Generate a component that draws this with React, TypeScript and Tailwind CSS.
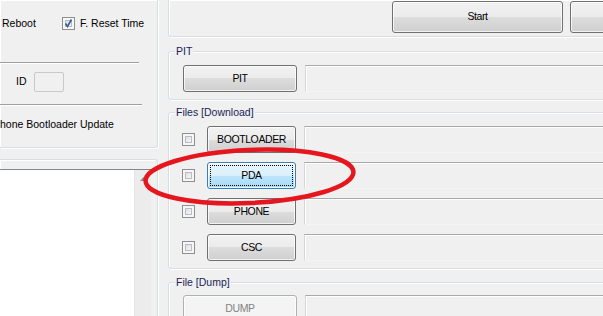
import type { ReactNode } from "react";

function GroupBox({ label, className = "", children }: { label?: string; className?: string; children?: ReactNode }) {
  return (
    <div className={`relative shrink-0 border border-[#d5dfe5] shadow-[inset_1px_1px_0_#fff,1px_1px_0_#fff] ${className}`}>
      {label ? (
        <span className="absolute -top-[7px] left-[6px] bg-[#f0f0f0] px-[1px] leading-[13px] text-[#1a2458]">{label}</span>
      ) : null}
      {children}
    </div>
  );
}

function WinButton({ children, className = "", state = "normal" }: { children?: ReactNode; className?: string; state?: "normal" | "hot" | "disabled" }) {
  const look =
    state === "hot"
      ? "border-[#3c7fb1] bg-[linear-gradient(#eaf6fd_0%,#d9f0fc_50%,#bee6fd_50%,#a7d9f5_100%)] text-black"
      : state === "disabled"
        ? "border-[#adb2b5] bg-[#f4f4f4] text-[#838383]"
        : "border-[#707070] bg-[linear-gradient(#f2f2f2_0%,#ebebeb_50%,#dddddd_50%,#cfcfcf_100%)] text-black";
  return (
    <div className={`relative shrink-0 flex items-center justify-center rounded-[3px] border shadow-[inset_0_0_0_1px_rgba(255,255,255,0.75)] ${look} ${className}`}>
      {state === "hot" ? <span className="absolute inset-[2px] border border-dotted border-black" /> : null}
      {children ? <span className="relative tracking-[-0.4px]">{children}</span> : null}
    </div>
  );
}

function CheckBox({ checked = false }: { checked?: boolean }) {
  return (
    <div className="relative w-[13px] h-[13px] shrink-0 border border-[#8f8f8f] bg-[#f6f6f6] p-[2px]">
      <div className="w-full h-full border border-[#b9bcc0] bg-[linear-gradient(135deg,#dcdee1,#f8f8f8)]" />
      {checked ? (
        <svg viewBox="0 0 11 11" className="absolute left-0 top-0 w-[11px] h-[11px]">
          <path d="M2.5 5.5 L4.5 8.5 L8.5 1.5" fill="none" stroke="#3a5a9a" strokeWidth="1.6" />
        </svg>
      ) : null}
    </div>
  );
}

function Field({ className = "" }: { className?: string }) {
  return (
    <div className={`h-[27px] flex-1 border border-t-[#a9a9a9] border-l-[#d6d6d6] border-r-[#d6d6d6] border-b-[#f4f4f4] bg-[#f0f0f0] shadow-[inset_1px_1px_0_#fff] ${className}`} />
  );
}

function Separator({ className = "" }: { className?: string }) {
  return <div className={`h-[2px] border-t border-[#a0a0a0] border-b border-b-white ${className}`} />;
}

const rows = ["BOOTLOADER", "PDA", "PHONE", "CSC"];

export default function App() {
  return (
    <div className="relative w-[603px] h-[316px] overflow-hidden bg-[#f0f0f0] flex font-['Liberation_Sans',Arial,sans-serif] text-[10.5px] text-black">
      {/* left column: options and message */}
      <div className="w-[160px] shrink-0 flex flex-col">
        <GroupBox className="w-[158px] h-[148px] border-t-0 border-l-0 rounded-br-[3px]">
          <div className="h-[62px] pt-[17px]">
            <div className="flex items-center h-[13px]">
              <span className="w-[62px] pl-[2px]">Reboot</span>
              <CheckBox checked />
              <span className="ml-[5px]">F. Reset Time</span>
            </div>
          </div>
          <Separator className="w-[139px]" />
          <div className="h-[40px] pt-[8px] flex items-start">
            <div className="flex items-center h-[20px]">
              <span className="ml-[16px]">ID</span>
              <div className="ml-[7px] w-[30px] h-[20px] rounded-[2px] border border-[#c8c8c8] bg-[#f0f0f0]" />
            </div>
          </div>
          <Separator className="w-[142px]" />
          <div className="pt-[12px] leading-[13px]">hone Bootloader Update</div>
        </GroupBox>
        <GroupBox className="mt-[11px] w-[158px] flex-1 border-l-0 border-b-0 rounded-tr-[3px] pt-[9px]">
          <div className="w-[151px] h-full flex border-t border-[#828790] bg-white">
            <div className="flex-1" />
            <div className="w-[17px] h-full bg-[#ececec] border-l border-[#e4e4e4] flex justify-center pt-[7px]">
              <svg viewBox="0 0 7 4" className="w-[7px] h-[4px]">
                <path d="M0 4 L3.5 0 L7 4 Z" fill="#8a8a8a" />
              </svg>
            </div>
          </div>
        </GroupBox>
      </div>

      {/* right column: start, pit, files, dump */}
      <div className="flex-1 pl-[8px] flex flex-col">
        <GroupBox className="w-[470px] h-[37px] border-t-0 rounded-bl-[3px]">
          <div className="flex pl-[223px] pt-[1px]">
            <WinButton className="w-[171px] h-[32px]">Start</WinButton>
            <WinButton className="ml-[7px] w-[171px] h-[32px]" />
          </div>
        </GroupBox>

        <GroupBox label="PIT" className="mt-[14px] w-[470px] h-[49px] rounded-[3px]">
          <div className="flex pl-[14px] pt-[13px]">
            <WinButton className="w-[114px] h-[27px]">PIT</WinButton>
            <Field className="ml-[8px]" />
          </div>
        </GroupBox>

        <GroupBox label="Files [Download]" className="mt-[12px] w-[470px] h-[157px] rounded-[3px]">
          <div className="flex flex-col gap-[9px] pl-[13px] pt-[13px]">
            {rows.map((r) => (
              <div key={r} className="flex items-center h-[27px]">
                <CheckBox />
                <WinButton state={r === "PDA" ? "hot" : "normal"} className="ml-[12px] w-[89px] h-[27px]">
                  {r}
                </WinButton>
                <Field className="ml-[8px]" />
              </div>
            ))}
          </div>
        </GroupBox>

        <GroupBox label="File [Dump]" className="mt-[13px] w-[470px] h-[60px] rounded-[3px]">
          <div className="flex pl-[14px] pt-[12px]">
            <WinButton state="disabled" className="w-[114px] h-[27px]">DUMP</WinButton>
            <Field className="ml-[8px]" />
          </div>
        </GroupBox>
      </div>

      {/* red marker ellipse drawn over the PDA row */}
      <svg className="pointer-events-none absolute left-0 top-0 w-[603px] h-[316px]" viewBox="0 0 603 316">
        <ellipse cx="249.5" cy="176.5" rx="104" ry="26.5" transform="rotate(-2.5 249.5 176.5)" fill="none" stroke="#e5161e" strokeWidth="4.5" />
      </svg>
    </div>
  );
}
